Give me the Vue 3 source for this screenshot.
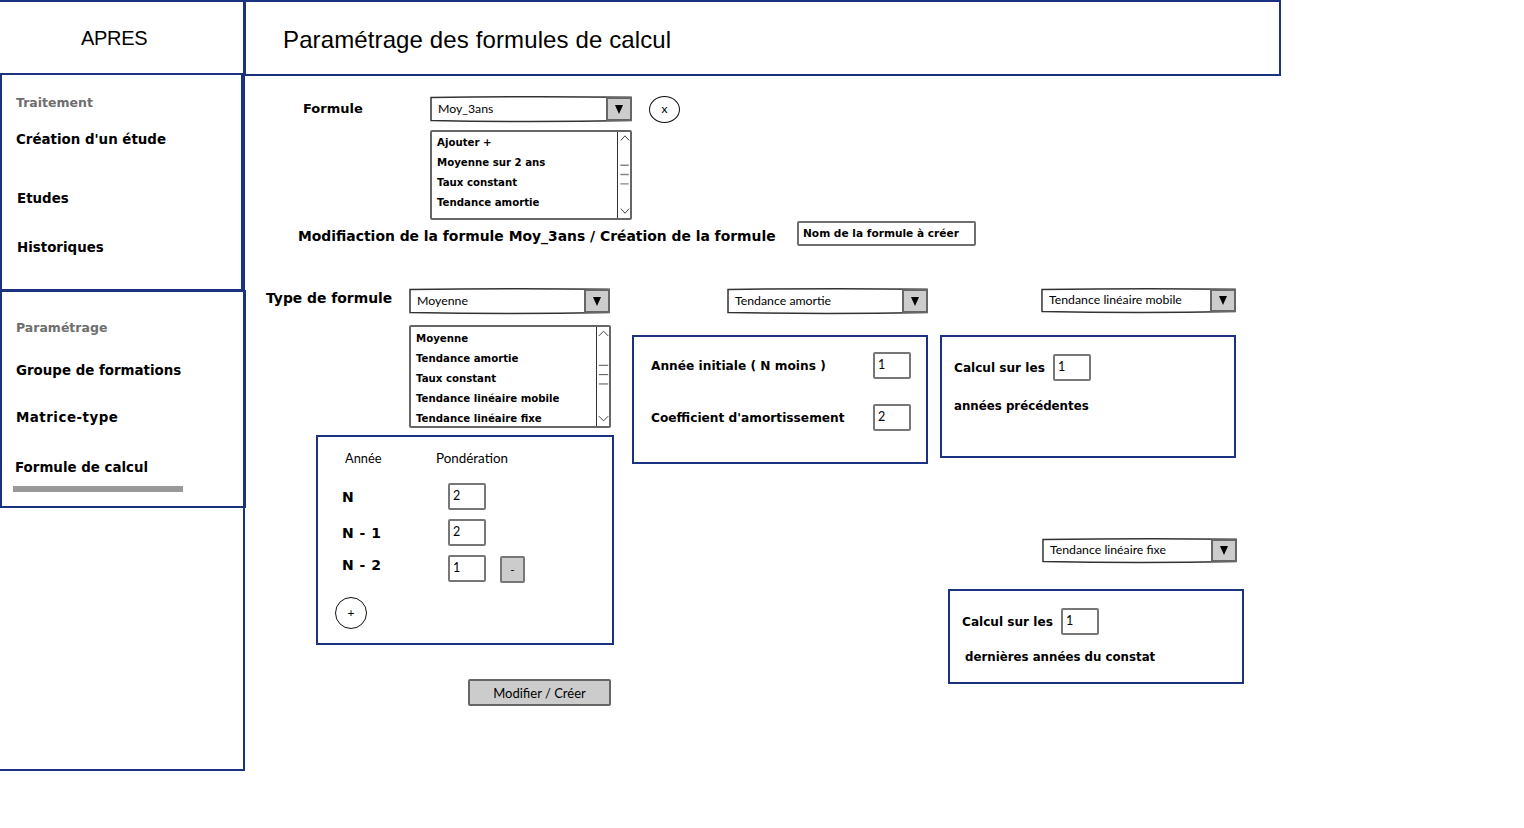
<script setup>
const list1 = ['Ajouter +', 'Moyenne sur 2 ans', 'Taux constant', 'Tendance amortie']
const list2 = ['Moyenne', 'Tendance amortie', 'Taux constant', 'Tendance linéaire mobile', 'Tendance linéaire fixe']
</script>

<template>
  <div class="page">
    <aside class="sidebar">
      <div class="brand">APRES</div>
      <nav class="panel panel-a">
        <div class="nav-head">Traitement</div>
        <div class="nav-item a1">Création d'un étude</div>
        <div class="nav-item a2">Etudes</div>
        <div class="nav-item a3">Historiques</div>
      </nav>
      <nav class="panel panel-b">
        <div class="nav-head">Paramétrage</div>
        <div class="nav-item b1">Groupe de formations</div>
        <div class="nav-item b2">Matrice-type</div>
        <div class="nav-item b3">Formule de calcul</div>
        <div class="active-bar"></div>
      </nav>
    </aside>

    <main class="main">
      <header class="title-bar">Paramétrage des formules de calcul</header>

      <section class="formula">
        <div class="f-row">
          <div class="bold f-label">Formule</div>
          <div class="combo c-formula">
            <svg class="sketch" viewBox="0 0 200 26" preserveAspectRatio="none"><path d="M1 1.500Q100 0 199 1.200L199 24.500Q100 26.500 1 24.500Z" /></svg>
            <span class="combo-text">Moy_3ans</span>
            <span class="combo-btn"><i class="tri"></i></span>
          </div>
          <div class="circle c-x">x</div>
        </div>
        <div class="listbox lb-1">
          <div class="lb-items">
            <div v-for="t in list1" :key="t" class="lb-item">{{ t }}</div>
          </div>
          <svg class="lb-scroll" width="15" height="90" viewBox="0 0 15 90">
            <path class="sb-chev" d="M3 8L7.500 3L12 8M3 81L7.500 86L12 81" />
            <path class="sb-dash" d="M2.500 34.500H11.500M2.500 44.500H11.500M2.500 54.500H11.500" />
          </svg>
        </div>
        <div class="m-row">
          <div class="bold m-label">Modifiaction de la formule Moy_3ans / Création de la formule</div>
          <div class="name-input">Nom de la formule à créer</div>
        </div>
      </section>

      <section class="types">
        <div class="col col1">
          <div class="t-row">
            <div class="bold t-label">Type de formule</div>
            <div class="combo c-type">
              <svg class="sketch" viewBox="0 0 200 26" preserveAspectRatio="none"><path d="M1 1.500Q100 0 199 1.200L199 24.500Q100 26.500 1 24.500Z" /></svg>
              <span class="combo-text">Moyenne</span>
              <span class="combo-btn"><i class="tri"></i></span>
            </div>
          </div>
          <div class="listbox lb-2">
            <div class="lb-items">
              <div v-for="t in list2" :key="t" class="lb-item">{{ t }}</div>
            </div>
            <svg class="lb-scroll" width="15" height="103" viewBox="0 0 15 103">
              <path class="sb-chev" d="M2 8L7 3L12 8M2 94L7 99L12 94" />
              <path class="sb-dash dark" d="M2 39.500H12M2 49.500H12M2 59.500H12" />
            </svg>
          </div>
          <div class="box box-weights">
            <div class="w-head">
              <span class="w-annee">Année</span>
              <span class="w-pond">Pondération</span>
            </div>
            <div class="w-row w-first">
              <span class="bold w-label">N</span>
              <span class="field">2</span>
            </div>
            <div class="w-row">
              <span class="bold w-label">N - 1</span>
              <span class="field">2</span>
            </div>
            <div class="w-row">
              <span class="bold w-label w-up">N - 2</span>
              <span class="field">1</span>
              <span class="minus">-</span>
            </div>
            <div class="circle c-plus">+</div>
          </div>
          <div class="action">Modifier / Créer</div>
        </div>

        <div class="col col2">
          <div class="combo c-amort">
            <svg class="sketch" viewBox="0 0 200 26" preserveAspectRatio="none"><path d="M1 1.500Q100 0 199 1.200L199 24.500Q100 26.500 1 24.500Z" /></svg>
            <span class="combo-text">Tendance amortie</span>
            <span class="combo-btn"><i class="tri"></i></span>
          </div>
          <div class="box box-amort">
            <div class="p-row">
              <span class="bold p-label">Année initiale ( N moins )</span>
              <span class="field">1</span>
            </div>
            <div class="p-row p-second">
              <span class="bold p-label">Coefficient d'amortissement</span>
              <span class="field">2</span>
            </div>
          </div>
        </div>

        <div class="col col3">
          <div class="combo c-mobile">
            <svg class="sketch" viewBox="0 0 200 26" preserveAspectRatio="none"><path d="M1 1.500Q100 0 199 1.200L199 24.500Q100 26.500 1 24.500Z" /></svg>
            <span class="combo-text">Tendance linéaire mobile</span>
            <span class="combo-btn"><i class="tri"></i></span>
          </div>
          <div class="box box-mobile">
            <div class="calc-row">
              <span class="bold calc-label">Calcul sur les</span>
              <span class="field">1</span>
            </div>
            <div class="bold calc-note">années précédentes</div>
          </div>
          <div class="combo c-fixe">
            <svg class="sketch" viewBox="0 0 200 26" preserveAspectRatio="none"><path d="M1 1.500Q100 0 199 1.200L199 24.500Q100 26.500 1 24.500Z" /></svg>
            <span class="combo-text">Tendance linéaire fixe</span>
            <span class="combo-btn"><i class="tri"></i></span>
          </div>
          <div class="box box-fixe">
            <div class="calc-row">
              <span class="bold calc-label">Calcul sur les</span>
              <span class="field">1</span>
            </div>
            <div class="bold calc-note note-shift">dernières années du constat</div>
          </div>
        </div>
      </section>
    </main>
  </div>
</template>

<style>
html, body { margin: 0; background: #fff; }
</style>

<style scoped>
* { box-sizing: border-box; }
.page {
  display: flex;
  width: 1524px;
  height: 828px;
  overflow: hidden;
  background: #fff;
  color: #000;
  font-family: "DejaVu Sans", sans-serif;
}
.bold {
  font-family: "DejaVu Sans", sans-serif;
  font-weight: 700;
  font-size: 13px;
  line-height: 20px;
  white-space: nowrap;
}

/* sidebar */
.sidebar {
  flex: 0 0 245px;
  min-width: 0;
  height: 771px;
  border-right: 2px solid #1b3281;
  border-bottom: 2px solid #1b3281;
}
.brand {
  height: 73px;
  border-top: 2px solid #1b3281;
  padding: 23px 0 0 81px;
  font-family: "Liberation Sans", sans-serif;
  font-size: 20px;
  line-height: 26px;
  letter-spacing: -0.3px;
}
.panel {
  border: 2px solid #1b3281;
  height: 218px;
}
.panel-a { width: 244px; padding: 18px 0 0 14px; border-width: 2px 3px 2px 2px; }
.panel-b { width: 246px; margin-top: -1px; padding: 26px 0 0 14px; }
.nav-head {
  font-family: "DejaVu Sans", sans-serif;
  font-weight: 700;
  font-size: 12.500px;
  line-height: 20px;
  color: #6e6e6e;
}
.nav-item {
  font-weight: 700;
  font-size: 13.400px;
  line-height: 20px;
  white-space: nowrap;
}
.a1 { margin-top: 17px; }
.a2 { margin-top: 39px; margin-left: 1px; }
.a3 { margin-top: 29px; margin-left: 1px; }
.b1 { margin-top: 23px; }
.b2 { margin-top: 27px; letter-spacing: 0.5px; }
.b3 { margin-top: 30px; margin-left: -1px; }
.active-bar {
  width: 170px;
  height: 6px;
  margin: 8px 0 0 -3px;
  background: #999;
}

/* main */
.main { flex: 0 0 1037px; margin-left: -1px; }
.title-bar {
  height: 76px;
  border: 2px solid #1b3281;
  padding: 24px 0 0 37px;
  font-family: "Liberation Sans", sans-serif;
  font-size: 24px;
  line-height: 28px;
  letter-spacing: 0.12px;
}
.formula { padding: 20px 0 0 59px; }
.f-row { display: flex; align-items: center; height: 26px; }
.f-label { width: 127px; margin-top: -1px; font-size: 13px; }
.m-row { display: flex; align-items: center; height: 25px; margin: 1px 0 0 -5px; }
.m-label { width: 499px; margin-top: 5px; font-size: 13.900px; }
.name-input {
  width: 179px;
  height: 25px;
  border: 2px solid #6e6e6e;
  border-radius: 2px;
  padding-left: 4px;
  font-weight: 700;
  font-size: 10.600px;
  line-height: 21px;
  white-space: nowrap;
}
.types { display: flex; margin-top: 42px; padding-left: 22px; }
.col1 { flex: 0 0 366px; }
.col2 { flex: 0 0 309px; }
.col3 { flex: 0 0 310px; }
.t-row { display: flex; align-items: flex-start; }
.t-label { width: 143px; font-size: 13.900px; }

/* combos */
.combo {
  position: relative;
  display: flex;
  align-items: center;
  height: 26px;
  flex: none;
}
.sketch {
  position: absolute;
  inset: 0;
  width: 100%;
  height: 100%;
  overflow: visible;
}
.sketch path {
  fill: none;
  stroke: #333;
  stroke-width: 1.500;
  vector-effect: non-scaling-stroke;
}
.combo-text {
  position: relative;
  margin-top: -2px;
  padding-left: 8px;
  font-family: Lato, sans-serif;
  font-size: 12.300px;
  white-space: nowrap;
}
.combo-btn {
  position: absolute;
  top: 1px;
  right: 0;
  bottom: 1px;
  width: 26px;
  display: flex;
  align-items: center;
  justify-content: center;
  background: #ccc;
  border: 2px solid #666;
  border-radius: 1px;
}
.tri {
  width: 0;
  height: 0;
  border-left: 4.500px solid transparent;
  border-right: 4.500px solid transparent;
  border-top: 9px solid #000;
}
.c-formula { width: 202px; }
.c-type, .c-amort { width: 201px; }
.c-amort { margin-left: 95px; }
.c-mobile { width: 195px; height: 25px; margin-left: 100px; }
.c-fixe { width: 195px; height: 25px; margin: 80px 0 0 101px; }

.circle {
  border: 1px solid #111;
  border-radius: 50%;
  display: flex;
  align-items: center;
  justify-content: center;
  flex: none;
  font-family: Lato, sans-serif;
  font-size: 12px;
  line-height: 1;
}
.c-x { width: 31px; height: 27px; margin-left: 17px; }
.c-plus { width: 32px; height: 32px; margin: 15px 0 0 -8px; }

/* lists */
.listbox {
  display: flex;
  border: 2px solid #666;
  border-radius: 2px;
  overflow: hidden;
  position: relative;
}
.lb-items { flex: 1; padding-left: 5px; }
.lb-item {
  height: 20px;
  font-weight: 700;
  font-size: 10.200px;
  line-height: 20px;
  white-space: nowrap;
}
.lb-scroll {
  flex: none;
  margin: -2px -2px -2px 0;
  border-left: 1px solid #333;
}
.sb-chev { fill: none; stroke: #333; stroke-width: 1; }
.sb-dash { fill: none; stroke: #888; stroke-width: 1.500; }
.sb-dash.dark { stroke: #444; stroke-width: 1; }
.lb-1 { width: 202px; height: 90px; margin: 8px 0 0 127px; }
.lb-1 .lb-items { padding-top: 1px; }
.lb-2 { width: 202px; height: 103px; margin: 11px 0 0 143px; }
.lb-2 .lb-items { padding-top: 2px; }

/* boxes */
.box { border: 2px solid #1b3281; }
.box-weights { width: 298px; height: 210px; margin: 7px 0 0 50px; padding: 11px 0 0 25px; }
.w-head {
  display: flex;
  height: 20px;
  font-family: Lato, sans-serif;
  font-size: 13.400px;
  line-height: 20px;
}
.w-annee { width: 91px; margin-left: 2px; font-size: 12.800px; }
.w-row { display: flex; align-items: center; height: 27px; margin-top: 9px; }
.w-first { margin-top: 15px; }
.w-label { width: 106px; margin-left: -1px; font-size: 14px; letter-spacing: 0.5px; }
.w-up { margin-top: -8px; }
.field {
  display: block;
  width: 38px;
  height: 27px;
  flex: none;
  border: 2px solid #777;
  border-radius: 2px;
  padding-left: 3px;
  font-family: Lato, sans-serif;
  font-size: 12.500px;
  line-height: 22px;
}
.minus {
  width: 25px;
  height: 27px;
  margin: 2px 0 0 14px;
  background: #ccc;
  border: 2px solid #777;
  border-radius: 2px;
  text-align: center;
  font-family: Lato, sans-serif;
  font-size: 12px;
  line-height: 24px;
}
.action {
  width: 143px;
  height: 27px;
  margin: 34px 0 0 202px;
  background: #ccc;
  border: 2px solid #666;
  border-radius: 2px;
  text-align: center;
  font-family: Lato, sans-serif;
  font-size: 13px;
  line-height: 24px;
}
.box-amort { width: 296px; height: 129px; margin-top: 21px; padding: 15px 0 0 17px; }
.p-row { display: flex; align-items: center; }
.p-second { margin-top: 25px; }
.p-label { width: 222px; font-size: 12.200px; }
.box-mobile { width: 296px; height: 123px; margin: 22px 0 0 -1px; padding: 17px 0 0 12px; }
.box-fixe { width: 296px; height: 95px; margin: 26px 0 0 7px; padding: 17px 0 0 12px; }
.calc-row { display: flex; align-items: center; }
.calc-label { width: 99px; font-size: 12.100px; }
.calc-note { margin-top: 15px; font-size: 11.800px; }
.note-shift { margin: 12px 0 0 3px; }
</style>
